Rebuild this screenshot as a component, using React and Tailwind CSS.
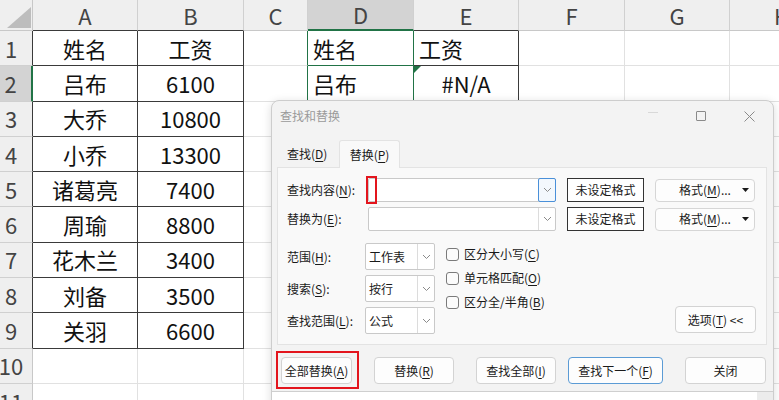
import React from "react";

const FONT = { fontFamily: '"Noto Sans CJK SC", "Noto Sans", sans-serif' };

const cols = ["A", "B", "C", "D", "E", "F", "G", "H"];

const data = {
  1: { 0: "姓名", 1: "工资", 3: "姓名", 4: "工资" },
  2: { 0: "吕布", 1: "6100", 3: "吕布", 4: "#N/A" },
  3: { 0: "大乔", 1: "10800" },
  4: { 0: "小乔", 1: "13300" },
  5: { 0: "诸葛亮", 1: "7400" },
  6: { 0: "周瑜", 1: "8800" },
  7: { 0: "花木兰", 1: "3400" },
  8: { 0: "刘备", 1: "3500" },
  9: { 0: "关羽", 1: "6600" },
};

function headCls(c) {
  if (c === 3) return "bg-[#d3d3d3] border-r border-r-[#d0d0d0] border-b-2 border-b-[#217346]";
  if (c <= 1 || c === 4) return "bg-[#efefef] border-r border-r-[#d0d0d0] border-b border-b-[#3a3a3a]";
  return "bg-[#efefef] border-r border-r-[#d0d0d0] border-b border-b-[#c8c8c8]";
}

function rowHeadCls(r) {
  if (r === 2) return "bg-[#d3d3d3] border-b border-b-[#d0d0d0] border-r-2 border-r-[#217346]";
  if (r <= 9) return "bg-[#efefef] border-b border-b-[#d0d0d0] border-r border-r-[#3a3a3a]";
  return "bg-[#efefef] border-b border-b-[#d0d0d0] border-r border-r-[#c8c8c8]";
}

function cellCls(r, c) {
  let b = "border-r border-b border-[#e1e1e1]";
  if (c <= 1 && r <= 9) b = "border-r border-b border-[#3a3a3a]";
  else if (c === 3 && r <= 2) b = "border-r border-b border-[#217346]";
  else if (c === 4 && r <= 2) b = "border-r border-b border-[#3a3a3a]";
  else if (c === 2 && r <= 2) b = "border-r border-b border-r-[#217346] border-b-[#e1e1e1]";
  let a = "justify-center";
  if (c === 3 || (c === 4 && r === 1)) a = "justify-start pl-[5px]";
  return b + " " + a;
}

function Chevron() {
  return (
    <svg width="9" height="6" viewBox="0 0 9 6" fill="none">
      <path d="M1 1l3.5 3.5L8 1" stroke="#8a8a8a" strokeWidth="1" />
    </svg>
  );
}

function Combo({ w, text, focus }) {
  return (
    <div className={`relative flex h-[24px] ${w} items-center rounded-[2px] border border-[#c9c9c9] bg-white`}>
      <span className="flex-1 pl-[3px] text-[12px] text-[#1a1a1a]">{text}</span>
      <span
        className={
          focus
            ? "flex h-[24px] w-[18px] items-center justify-center rounded-[2px] border border-[#4a90d9] bg-[#f3f8fd] -mr-px"
            : "flex h-full w-[17px] items-center justify-center border-l border-[#dcdcdc]"
        }
      >
        <Chevron />
      </span>
    </div>
  );
}

function Btn({ w, children, blue }) {
  return (
    <div
      className={`flex h-[27px] ${w} items-center justify-center rounded-[4px] border ${
        blue ? "border-[#5b9bd5]" : "border-[#d3d3d3]"
      } bg-[#fdfdfd] text-[12px] text-[#1a1a1a]`}
    >
      {children}
    </div>
  );
}

function Check({ children }) {
  return (
    <div className="flex items-center gap-[5px] text-[12px] text-[#1a1a1a]">
      <span className="h-[13px] w-[13px] rounded-[3px] border border-[#7a7a7a] bg-[#fbfbfb]" />
      <span>{children}</span>
    </div>
  );
}

function FormatBtn() {
  return (
    <div className="ml-[11px] flex h-[23px] w-[100px] items-center rounded-[4px] border border-[#d6d6d6] bg-[#fdfdfd] text-[12px] text-[#1a1a1a]">
      <span className="flex-1 pl-[12px] text-center">
        格式(<u className="underline-offset-2">M</u>)...
      </span>
      <svg className="mr-[5px]" width="7" height="4" viewBox="0 0 7 4">
        <path d="M0 0H7L3.5 4Z" fill="#1a1a1a" />
      </svg>
    </div>
  );
}

function Dialog() {
  return (
    <div className="absolute left-[271px] top-[100px] flex h-[320px] w-[503px] flex-col rounded-t-[8px] border border-[#cdcdcd] bg-[#f3f3f3] shadow-[0_2px_10px_rgba(0,0,0,0.14)]">
      <div className="flex h-[30px] items-center pl-[8px]">
        <span className="text-[12px] text-[#9a9a9a]">查找和替换</span>
        <div className="ml-auto flex">
          <span className="flex w-[48px] justify-center">
            <span className="mt-[1px] h-px w-[10px] bg-[#d8d8d8]" />
          </span>
          <span className="flex w-[48px] justify-center">
            <span className="h-[10px] w-[10px] rounded-[1px] border border-[#8a8a8a]" />
          </span>
          <span className="flex w-[48px] justify-center">
            <svg width="11" height="11" viewBox="0 0 11 11">
              <path d="M0.5 0.5l10 10M10.5 0.5l-10 10" stroke="#8a8a8a" strokeWidth="1" />
            </svg>
          </span>
        </div>
      </div>

      <div className="mt-[9px] flex h-[27px] items-end pl-[8px]">
        <div className="flex h-[27px] w-[57px] items-center pl-[7px] text-[12px] text-[#1a1a1a]">
          查找(<u className="underline-offset-2">D</u>)
        </div>
        <div className="relative z-10 -mb-px ml-[2px] flex h-[28px] w-[61px] items-center justify-center rounded-t-[3px] border border-b-0 border-[#e3e3e3] bg-[#f9f9f9] text-[12px] text-[#1a1a1a]">
          替换(<u className="underline-offset-2">P</u>)
        </div>
      </div>

      <div className="ml-[5px] mr-[6px] flex h-[178px] flex-col border border-[#e3e3e3] bg-[#f9f9f9] pl-[9px] pt-[10px] pr-[10px]">
        <div className="flex h-[24px] items-center">
          <span className="w-[81px] text-[12px] text-[#1a1a1a]">
            查找内容(<u className="underline-offset-2">N</u>):
          </span>
          <div className="relative">
            <Combo w="w-[188px]" text="" focus />
            <span className="absolute left-[-2px] top-[-2px] h-[28px] w-[11px] border-2 border-[#e3151d]" />
          </div>
          <div className="ml-[11px] flex h-[24px] w-[77px] items-center justify-center border border-[#333] bg-white text-[12px] text-[#1a1a1a]">
            未设定格式
          </div>
          <FormatBtn />
        </div>

        <div className="mt-[5px] flex h-[24px] items-center">
          <span className="w-[81px] text-[12px] text-[#1a1a1a]">
            替换为(<u className="underline-offset-2">E</u>):
          </span>
          <Combo w="w-[188px]" text="" />
          <div className="ml-[11px] flex h-[24px] w-[77px] items-center justify-center border border-[#333] bg-white text-[12px] text-[#1a1a1a]">
            未设定格式
          </div>
          <FormatBtn />
        </div>

        <div className="mt-[12px] flex items-end">
          <div className="flex flex-col gap-[5px]">
            <div className="flex h-[27px] items-center">
              <span className="w-[78px] text-[12px] text-[#1a1a1a]">
                范围(<u className="underline-offset-2">H</u>):
              </span>
              <Combo w="w-[70px] h-[27px]" text="工作表" />
            </div>
            <div className="flex h-[27px] items-center">
              <span className="w-[78px] text-[12px] text-[#1a1a1a]">
                搜索(<u className="underline-offset-2">S</u>):
              </span>
              <Combo w="w-[70px] h-[27px]" text="按行" />
            </div>
            <div className="flex h-[27px] items-center">
              <span className="w-[78px] text-[12px] text-[#1a1a1a]">
                查找范围(<u className="underline-offset-2">L</u>):
              </span>
              <Combo w="w-[70px] h-[27px]" text="公式" />
            </div>
          </div>
          <div className="ml-[11px] flex flex-col gap-[6px] self-start pt-[2px]">
            <Check>
              区分大小写(<u className="underline-offset-2">C</u>)
            </Check>
            <Check>
              单元格匹配(<u className="underline-offset-2">O</u>)
            </Check>
            <Check>
              区分全/半角(<u className="underline-offset-2">B</u>)
            </Check>
          </div>
          <div className="ml-auto mb-[1px]">
            <Btn w="w-[81px]">
              选项(<u className="underline-offset-2">T</u>) &lt;&lt;
            </Btn>
          </div>
        </div>
      </div>

      <div className="mt-[12px] flex pl-[9px]">
        <div className="relative">
          <Btn w="w-[71px]">
            全部替换(<u className="underline-offset-2">A</u>)
          </Btn>
          <span className="absolute left-[-5px] top-[-6px] h-[38px] w-[83px] border-2 border-[#e3151d]" />
        </div>
        <div className="ml-[22px]">
          <Btn w="w-[80px]">
            替换(<u className="underline-offset-2">R</u>)
          </Btn>
        </div>
        <div className="ml-[22px]">
          <Btn w="w-[80px]">
            查找全部(<u className="underline-offset-2">I</u>)
          </Btn>
        </div>
        <div className="ml-[12px]">
          <Btn w="w-[95px]" blue>
            查找下一个(<u className="underline-offset-2">F</u>)
          </Btn>
        </div>
        <div className="ml-[22px]">
          <Btn w="w-[81px]">关闭</Btn>
        </div>
      </div>

      <div className="mt-[7px] flex flex-1 border-t border-[#cfcfcf] bg-white">
        <div className="flex-1" />
        <div className="w-[16px] bg-[#ececec]" />
      </div>
    </div>
  );
}

export default function App() {
  const rows = Array.from({ length: 11 }, (_, i) => i + 1);
  return (
    <div className="relative h-[400px] w-[779px] overflow-hidden bg-white" style={FONT}>
      <div className="grid w-[835px] grid-cols-[33px_105px_106px_64px_106px_105px_106px_105px_105px] grid-rows-[31px_repeat(11,35.3px)]">
        <div className="relative border-b border-r border-[#c8c8c8] bg-[#efefef]">
          <svg className="absolute left-[7px] top-[7px]" width="24" height="21" viewBox="0 0 24 21">
            <path d="M24 0V21H0Z" fill="#bdbdbd" />
          </svg>
        </div>
        {cols.map((c, i) => (
          <div
            key={c}
            className={`flex items-center justify-center text-[22px] text-[#444] ${headCls(i)}`}
          >
            {c}
          </div>
        ))}
        {rows.map((r) => (
          <React.Fragment key={r}>
            <div className={`flex items-center justify-center pr-[10px] text-[22px] text-[#444] ${rowHeadCls(r)}`}>
              {r}
            </div>
            {cols.map((c, i) => (
              <div
                key={c}
                className={`relative flex items-center overflow-hidden whitespace-nowrap text-[22px] text-[#111] ${cellCls(r, i)}`}
              >
                {r === 2 && i === 4 && (
                  <svg className="absolute left-0 top-0" width="7" height="7" viewBox="0 0 7 7">
                    <path d="M0 0H7L0 7Z" fill="#217346" />
                  </svg>
                )}
                {data[r] && data[r][i]}
              </div>
            ))}
          </React.Fragment>
        ))}
      </div>
      <Dialog />
    </div>
  );
}
